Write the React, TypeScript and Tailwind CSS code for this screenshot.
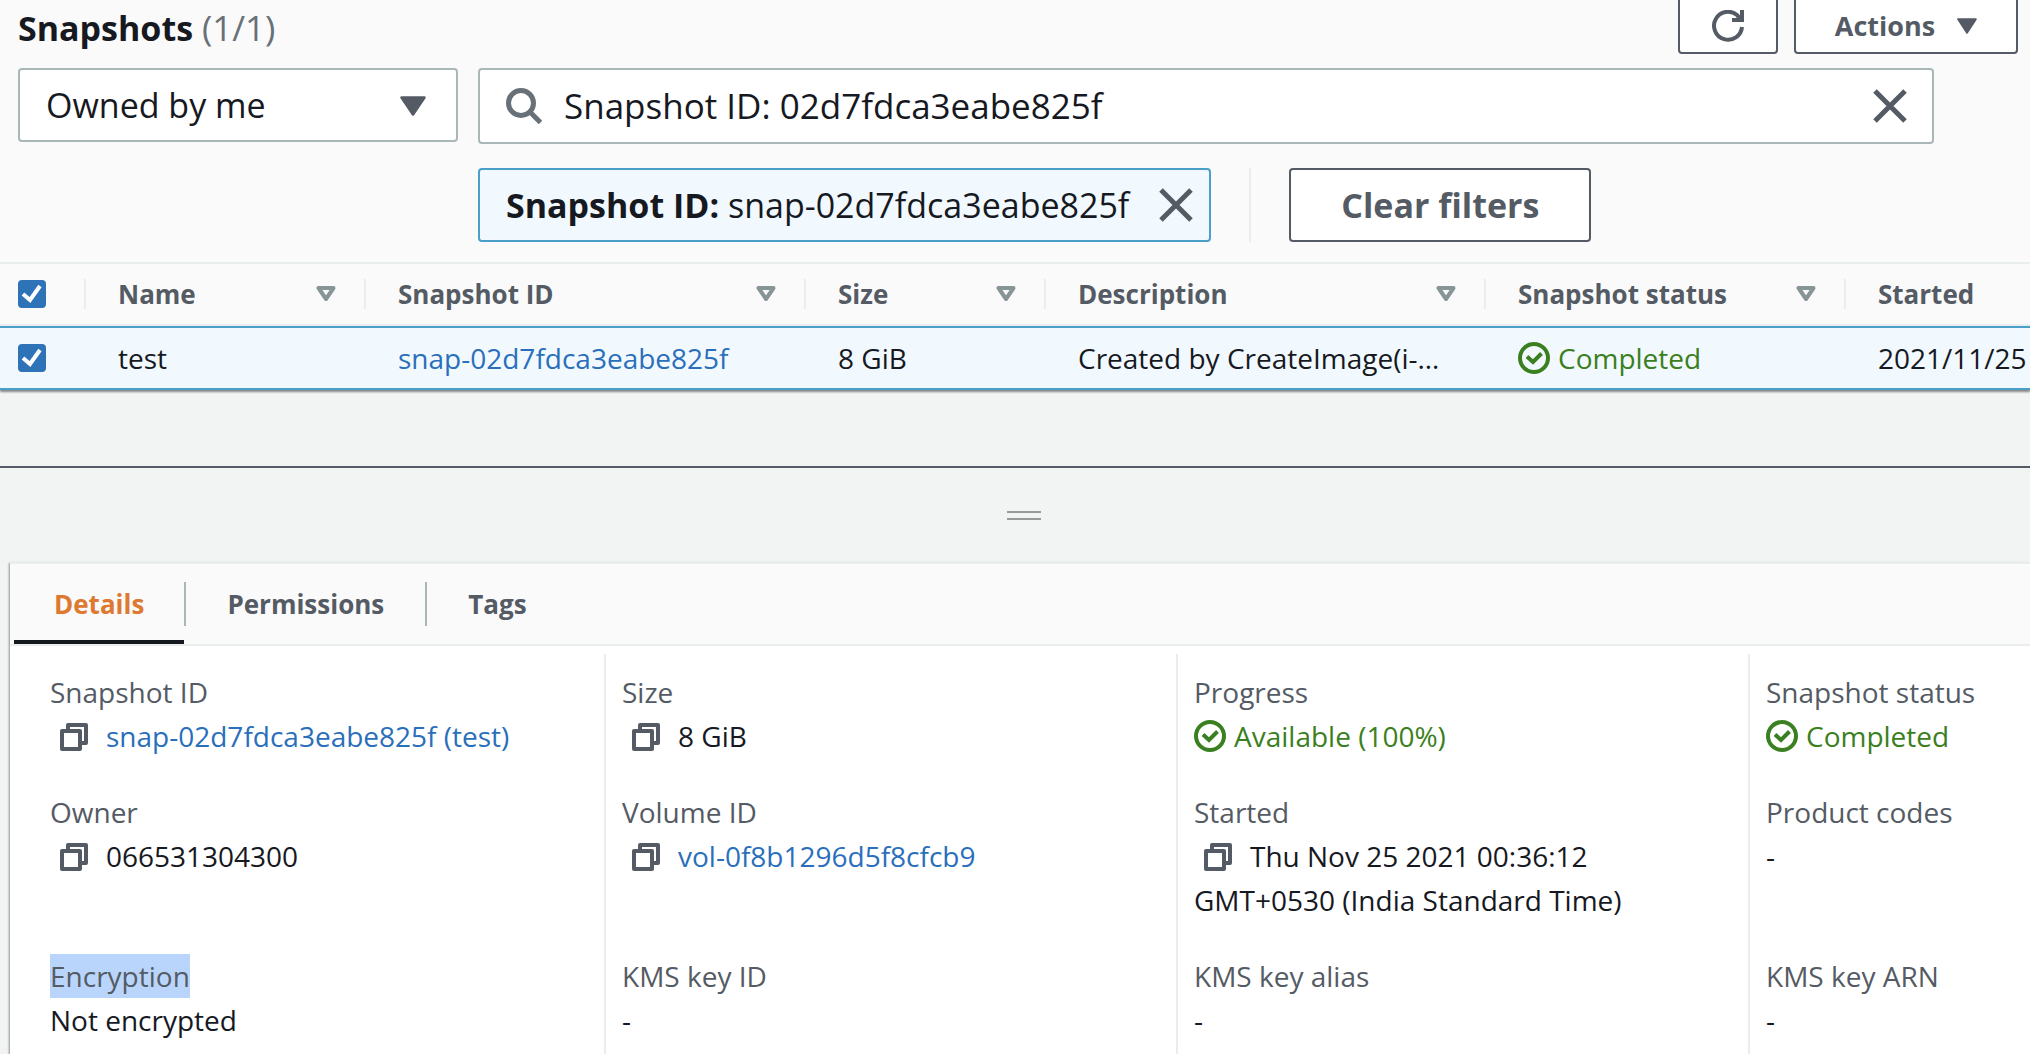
import React from "react";

const TriangleDown = ({ className }: { className: string }) => (
  <svg viewBox="0 0 20 16" className={className} fill="currentColor" stroke="currentColor" strokeWidth="2" strokeLinejoin="round" preserveAspectRatio="none" aria-hidden="true">
    <path d="M1.2 1.2h17.6L10 14.8z" />
  </svg>
);

const SortIcon = () => (
  <svg viewBox="0 0 20 16" className="h-4 w-5 shrink-0 text-[#879596]" fill="none" stroke="currentColor" strokeWidth="4" strokeLinejoin="round" aria-hidden="true">
    <path d="M2.500 2h15L10 13z" />
  </svg>
);

const CloseIcon = () => (
  <svg viewBox="0 0 34 34" className="h-[34px] w-[34px]" fill="none" stroke="currentColor" strokeWidth="5" aria-hidden="true">
    <path d="M2 2l30 30M32 2L2 32" />
  </svg>
);

const CopyIcon = () => (
  <svg viewBox="0 0 28 28" className="h-7 w-7" fill="none" stroke="currentColor" strokeWidth="4" strokeLinejoin="round" aria-hidden="true">
    <path d="M2 8h18v18H2z" />
    <path d="M8 8V2h18v18h-6" />
  </svg>
);

const Status = ({ children }: { children: React.ReactNode }) => (
  <span className="flex items-center gap-2 text-[#3a8020]">
    <svg viewBox="0 0 32 32" className="h-8 w-8 shrink-0" fill="none" stroke="currentColor" strokeWidth="4" aria-hidden="true">
      <circle cx="16" cy="16" r="14" />
      <path d="M9 14.500l6 5.500 8.500-8.500" />
    </svg>
    {children}
  </span>
);

const Checkbox = ({ label }: { label: string }) => (
  <span className="grid h-7 w-7">
    <input type="checkbox" defaultChecked aria-label={label} className="col-start-1 row-start-1 h-7 w-7 appearance-none rounded bg-[#2e73b8]" />
    <svg viewBox="0 0 28 28" className="pointer-events-none col-start-1 row-start-1 h-7 w-7" fill="none" stroke="#fff" strokeWidth="4" aria-hidden="true">
      <path d="M5 14l7 6L22 6" />
    </svg>
  </span>
);

const Copyable = ({ label, href, children }: { label: string; href?: string; children: React.ReactNode }) => (
  <>
    <button type="button" aria-label={`Copy ${label}`} className="mr-[18px] ml-[10px] inline-flex align-[-4px] text-[#545b64]">
      <CopyIcon />
    </button>
    {href ? <a href={href} className="text-[#2a6fbb]">{children}</a> : children}
  </>
);

const columns = ["Name", "Snapshot ID", "Size", "Description", "Snapshot status", "Started"];

const fields: { label: string; value: React.ReactNode; selected?: boolean }[] = [
  { label: "Snapshot ID", value: <Copyable label="Snapshot ID" href="#snapshot">snap-02d7fdca3eabe825f (test)</Copyable> },
  { label: "Size", value: <Copyable label="Size">8 GiB</Copyable> },
  { label: "Progress", value: <Status>Available (100%)</Status> },
  { label: "Snapshot status", value: <Status>Completed</Status> },
  { label: "Owner", value: <Copyable label="Owner">066531304300</Copyable> },
  { label: "Volume ID", value: <Copyable label="Volume ID" href="#volume">vol-0f8b1296d5f8cfcb9</Copyable> },
  { label: "Started", value: <Copyable label="Started">Thu Nov 25 2021 00:36:12 GMT+0530 (India Standard Time)</Copyable> },
  { label: "Product codes", value: "-" },
  { label: "Encryption", value: "Not encrypted", selected: true },
  { label: "KMS key ID", value: "-" },
  { label: "KMS key alias", value: "-" },
  { label: "KMS key ARN", value: "-" },
];

const cell = "border-y-2 border-[#4a9fc9] p-0 pl-8";

export default function App() {
  return (
    <main className="flex min-h-screen flex-col overflow-hidden bg-[#f2f3f3] font-['Open_Sans','Noto_Sans',sans-serif] text-[28px] leading-[44px] font-medium text-[#16191f]">
      <section className="border-b-2 border-[#eaeded] bg-[#fafafa] pr-3 pb-5 pl-[18px]">
        <div className="flex h-[54px] items-end justify-between overflow-hidden">
          <h1 className="text-[34px] leading-[52px] font-bold">
            Snapshots <span className="text-[35px] font-medium text-[#687078]">(1/1)</span>
          </h1>
          <div className="flex shrink-0 gap-4 text-[#545b64]">
            <button type="button" aria-label="Refresh" className="flex h-16 w-[100px] items-center justify-center rounded border-2 border-[#545b64] bg-white pt-2">
              <svg viewBox="0 0 32 32" className="h-8 w-8" fill="none" stroke="currentColor" strokeWidth="4" aria-hidden="true">
                <path d="M30 17a14 14 0 1 1-5-12l4 5" />
                <path d="M30 0v10H20" />
              </svg>
            </button>
            <button type="button" className="flex h-16 w-56 items-center justify-center gap-[22px] rounded border-2 border-[#545b64] bg-white pt-2 text-[27px] font-bold">
              Actions
              <TriangleDown className="h-4 w-5" />
            </button>
          </div>
        </div>
        <div className="mt-[14px] grid grid-cols-[440px_1fr] items-start gap-x-5 gap-y-6 pr-[84px] text-[34px]">
          <div className="relative">
            <select aria-label="Ownership" className="h-[74px] w-full appearance-none rounded border-2 border-[#aab7b8] bg-white pl-[26px]">
              <option>Owned by me</option>
            </select>
            <TriangleDown className="pointer-events-none absolute top-7 right-8 h-5 w-[26px] text-[#545b64]" />
          </div>
          <div className="flex h-[76px] items-center gap-[22px] rounded border-2 border-[#aab7b8] bg-white pr-[25px] pl-[26px]">
            <svg viewBox="0 0 36 36" className="h-9 w-9 shrink-0 text-[#687078]" fill="none" stroke="currentColor" strokeWidth="5" aria-hidden="true">
              <circle cx="15" cy="15" r="12.5" />
              <path d="M24 24l10.500 10.500" />
            </svg>
            <input type="text" aria-label="Filter snapshots" defaultValue="Snapshot ID: 02d7fdca3eabe825f" className="min-w-0 flex-1 bg-transparent text-[35px]" />
            <button type="button" aria-label="Clear search" className="text-[#545b64]"><CloseIcon /></button>
          </div>
          <div className="col-start-2 flex h-[74px]">
            <div className="flex items-center justify-between gap-[30px] rounded border-2 border-[#4a9fc9] bg-[#f2f9fe] pr-4 pl-[26px] whitespace-nowrap">
              <span><span className="font-bold">Snapshot ID:</span> snap-02d7fdca3eabe825f</span>
              <button type="button" aria-label="Remove filter" className="text-[#545b64]"><CloseIcon /></button>
            </div>
            <div className="mr-[38px] ml-[38px] w-0.5 bg-[#eaeded]" />
            <button type="button" className="rounded border-2 border-[#545b64] bg-white px-[50px] font-bold text-[#545b64]">Clear filters</button>
          </div>
        </div>
      </section>

      <div className="overflow-hidden shadow-[0_2px_2px_0_rgba(0,0,0,0.45)]">
        <table className="w-full table-fixed border-separate border-spacing-0 text-left whitespace-nowrap">
          <colgroup>
            <col className="w-[86px]" />
            <col className="w-[280px]" />
            <col className="w-[440px]" />
            <col className="w-[240px]" />
            <col className="w-[440px]" />
            <col className="w-[360px]" />
            <col />
          </colgroup>
          <thead className="bg-[#fafafa] text-[26px] text-[#545b64]">
            <tr className="h-[62px]">
              <th className="border-b-2 border-[#eaeded] p-0 pl-[18px]"><Checkbox label="Select all snapshots" /></th>
              {columns.map((name) => (
                <th key={name} className="border-b-2 border-[#eaeded] p-0 font-bold">
                  <div className="-ml-0.5 flex h-[30px] items-center justify-between border-l-2 border-[#eaeded] pr-[30px] pl-8">
                    {name}
                    {name !== "Started" && <SortIcon />}
                  </div>
                </th>
              ))}
            </tr>
          </thead>
          <tbody>
            <tr className="h-16 bg-[#f2f9fe]">
              <td className="border-y-2 border-[#4a9fc9] p-0 pl-[18px]"><Checkbox label="Select test" /></td>
              <td className={cell}>test</td>
              <td className={cell}><a href="#snapshot" className="text-[#2a6fbb]">snap-02d7fdca3eabe825f</a></td>
              <td className={cell}>8 GiB</td>
              <td className={cell}>Created by CreateImage(i-…</td>
              <td className={cell}><Status>Completed</Status></td>
              <td className={cell}>2021/11/25</td>
            </tr>
          </tbody>
        </table>
      </div>

      <div className="mt-[76px] flex h-24 items-center justify-center border-t-2 border-[#545b64] pl-[18px]">
        <div role="separator" aria-label="Resize panel" className="h-[9px] w-[34px] border-y-2 border-[#999999]" />
      </div>

      <section className="ml-[10px] flex flex-1 flex-col border-t-2 border-[#eaeded] bg-white shadow-[-1px_1px_2px_rgba(0,0,0,0.4)]">
        <div role="tablist" className="flex h-[82px] border-b-2 border-[#eaeded] bg-[#fafafa] pl-1 text-[26px] font-bold text-[#545b64]">
          <button role="tab" aria-selected="true" type="button" className="border-b-4 border-[#16191f] px-10 pt-1 text-[#dd7931]">Details</button>
          <span className="my-[18px] w-0.5 bg-[#aab7b8]" />
          <button role="tab" aria-selected="false" type="button" className="border-b-4 border-transparent px-[41px] pt-1">Permissions</button>
          <span className="my-[18px] w-0.5 bg-[#aab7b8]" />
          <button role="tab" aria-selected="false" type="button" className="border-b-4 border-transparent px-[41px] pt-1">Tags</button>
        </div>
        <dl className="mt-2 grid flex-1 grid-cols-[594fr_572fr_572fr_282fr] grid-rows-[auto_auto_1fr]">
          {fields.map((field, i) => (
            <div key={field.label} className={`${i % 4 ? "border-l-2 border-[#eaeded] pl-4" : "pl-10"} ${i < 4 ? "pt-4" : ""} ${i < 8 ? "pb-8" : ""} ${i % 4 === 3 ? "pr-2" : "pr-8"}`}>
              <dt className="text-[#545b64]">
                {field.selected ? <mark className="inline-block bg-[#bad5fb] text-inherit">{field.label}</mark> : field.label}
              </dt>
              <dd>{field.value}</dd>
            </div>
          ))}
        </dl>
      </section>
    </main>
  );
}
